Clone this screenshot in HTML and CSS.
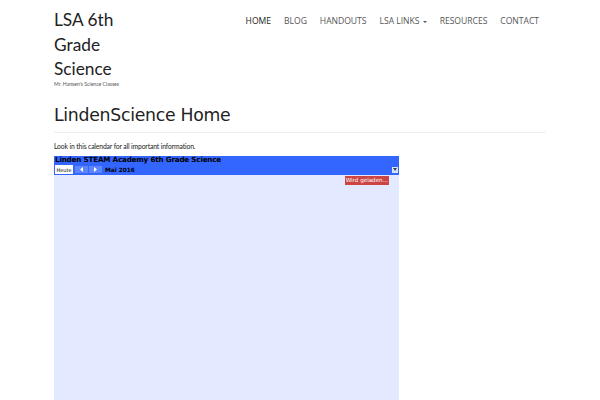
FILE: index.html
```
<!DOCTYPE html>
<html lang="en">
<head>
  <meta charset="UTF-8" />
  <title>LindenScience Home</title>
  <link rel="stylesheet" href="styles.css">
</head>
<body>
  <div class="container">
    <header class="banner">
      <div class="brand">
        <a href="#" class="site-name">LSA 6th Grade Science</a>
        <p class="tagline">Mr. Hansen's Science Classes</p>
      </div>
      <nav>
        <ul class="nav">
          <li class="active"><a href="#">HOME</a></li>
          <li><a href="#">BLOG</a></li>
          <li><a href="#">HANDOUTS</a></li>
          <li><a href="#">LSA LINKS <span class="caret"></span></a></li>
          <li><a href="#">RESOURCES</a></li>
          <li><a href="#">CONTACT</a></li>
        </ul>
      </nav>
    </header>

    <main>
      <h1>LindenScience Home</h1>
      <p class="intro">Look in this calendar for all important information.</p>
      <section class="calendar">
        <div class="calendar-head">
          <div class="calendar-title">Linden STEAM Academy 6th Grade Science</div>
          <div class="controls">
            <button class="today">Heute</button>
            <button class="arrow"><svg width="3" height="5" viewBox="0 0 3 5"><path d="M3 0v5L0 2.5z" fill="#fff"/></svg></button>
            <button class="arrow"><svg width="3" height="5" viewBox="0 0 3 5"><path d="M0 0v5l3-2.5z" fill="#fff"/></svg></button>
            <span class="month">Mai 2016</span>
            <button class="menu"><svg width="4" height="3" viewBox="0 0 4 3"><path d="M0 0h4L2 3z" fill="#345"/></svg></button>
          </div>
        </div>
        <div class="calendar-body">
          <span class="loading">Wird geladen...</span>
        </div>
      </section>
    </main>
  </div>
</body>
</html>
```
FILE: styles.css
```
body {
  margin: 0;
  height: 400px;
  overflow: hidden;
  background: #fff;
  color: #222;
  font-family: Lato, sans-serif;
}
.container {
  width: 492px;
  margin: 0 auto;
}
.banner {
  display: flex;
  justify-content: space-between;
  height: 96px;
}
.brand {
  width: 80px;
  padding-top: 8px;
}
.site-name {
  display: block;
  color: #222;
  font-size: 17.3px;
  line-height: 24.6px;
  text-decoration: none;
}
.tagline {
  margin: 0;
  color: #555;
  font-size: 5.1px;
  line-height: 5px;
  white-space: nowrap;
}
.nav {
  display: flex;
  gap: 13px;
  margin: 0;
  padding: 14px 7px 0 0;
  list-style: none;
  line-height: 14px;
}
.nav a {
  display: block;
  color: #555;
  font-family: "Open Sans", sans-serif;
  font-size: 8.6px;
  letter-spacing: -0.03px;
  text-decoration: none;
  white-space: nowrap;
}
.nav .active a {
  color: #222;
}
.caret {
  display: inline-block;
  margin-left: 1px;
  border-top: 2px solid #555;
  border-left: 2px solid transparent;
  border-right: 2px solid transparent;
  vertical-align: middle;
}
h1 {
  height: 36px;
  margin: 0 0 8px;
  border-bottom: 1px solid #eee;
  font-family: "DejaVu Sans", sans-serif;
  font-size: 17.3px;
  font-weight: normal;
  letter-spacing: -0.28px;
  line-height: 39px;
}
.intro {
  margin: 0;
  font-size: 6.8px;
  letter-spacing: -0.14px;
  line-height: 10px;
}
.calendar {
  width: 345px;
  margin-top: 5px;
  font-family: "DejaVu Sans", sans-serif;
}
.calendar-head {
  height: 19px;
  background: #36f;
  color: #000;
}
.calendar-title {
  padding-left: 1px;
  font-size: 7.2px;
  font-weight: bold;
  letter-spacing: -0.19px;
  line-height: 8px;
}
.controls {
  display: flex;
  align-items: center;
  height: 11px;
}
.controls button {
  padding: 0;
  border: 0;
}
.today {
  width: 18px;
  height: 9px;
  margin: 0 2px 0 1px;
  background: #fff;
  color: #000;
  font: 5px "DejaVu Sans", sans-serif;
}
.arrow {
  display: flex;
  align-items: center;
  justify-content: center;
  width: 13px;
  height: 7px;
  margin-right: 1px;
  background: #5c85ff;
}
.month {
  margin-left: 2px;
  font-size: 5.8px;
  font-weight: bold;
}
.menu {
  display: flex;
  align-items: center;
  justify-content: center;
  width: 6px;
  height: 6px;
  margin-left: auto;
  margin-right: 1px;
  background: #d5e4f5;
}
.calendar-body {
  display: flex;
  justify-content: flex-end;
  align-items: flex-start;
  height: 225px;
  padding: 1px 10px 0 0;
  background: #e3e9ff;
}
.loading {
  padding: 0 1px;
  background: #c44;
  color: #fff;
  font-size: 5.6px;
  line-height: 9px;
}
```
